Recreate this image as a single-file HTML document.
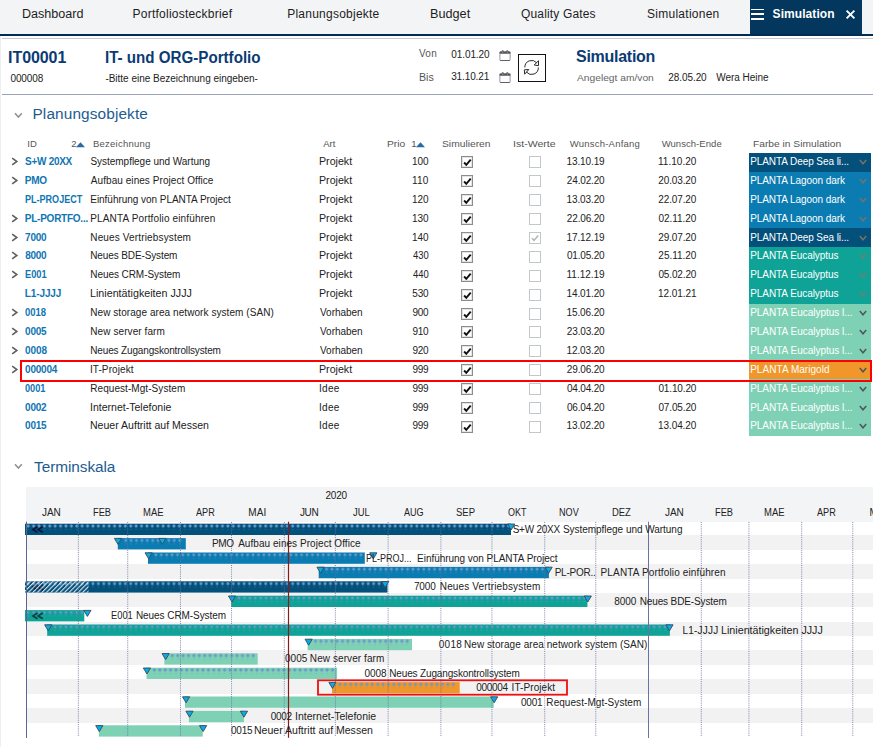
<!DOCTYPE html><html><head><meta charset="utf-8"><title>Simulation</title><style>
html,body{margin:0;padding:0}body{width:873px;height:747px;position:relative;overflow:hidden;background:#fff;font-family:"Liberation Sans", Arial, sans-serif}
.t{position:absolute;white-space:pre;line-height:1;transform-origin:0 0}
#edge{position:absolute;left:0;top:36px;width:1.3px;height:711px;background:#efefef}
</style></head><body>
<div id="edge"></div>
<div style="position:absolute;left:0.00px;top:0.00px;width:873.00px;height:34.00px;background:#f3f4f6;"></div>
<div style="position:absolute;left:750.40px;top:0.00px;width:111.50px;height:34.00px;background:#03375d;"></div>
<div style="position:absolute;left:0.00px;top:34.00px;width:873.00px;height:2.00px;background:#022c52;"></div>
<div style="position:absolute;left:2.00px;top:37.50px;width:871.00px;height:1.30px;background:#c3c8d1;"></div>
<div style="position:absolute;left:751.00px;top:8.50px;width:13.40px;height:1.80px;background:#fff;"></div>
<div style="position:absolute;left:751.00px;top:13.30px;width:13.40px;height:1.80px;background:#fff;"></div>
<div style="position:absolute;left:751.00px;top:18.00px;width:13.40px;height:1.80px;background:#fff;"></div>
<svg style="position:absolute;left:845px;top:8.9px" width="11" height="11" viewBox="0 0 11 11"><path d="M1.6 1.6 L9.4 9.4 M9.4 1.6 L1.6 9.4" stroke="#fff" stroke-width="1.9" fill="none"/></svg>
<div style="position:absolute;left:2.00px;top:94.00px;width:871.00px;height:1.00px;background:#9aa3b8;"></div>
<svg style="position:absolute;left:498.8px;top:50px" width="12" height="12" viewBox="0 0 12 12"><rect x="0.9" y="1.9" width="10.2" height="8.6" rx="0.8" fill="#fff" stroke="#8d8894" stroke-width="0.9"/><path d="M1.2 10.5 H10.8" stroke="#5a5860" stroke-width="0.9"/><rect x="0.5" y="1.4" width="11" height="2.4" rx="0.8" fill="#55535a"/><rect x="2.6" y="0.3" width="2.2" height="2" rx="1" fill="#55535a"/><rect x="7.2" y="0.3" width="2.2" height="2" rx="1" fill="#55535a"/><circle cx="3.7" cy="2.1" r="0.7" fill="#c9a078"/><circle cx="8.3" cy="2.1" r="0.7" fill="#8fa6c8"/></svg>
<svg style="position:absolute;left:498.8px;top:71.6px" width="12" height="12" viewBox="0 0 12 12"><rect x="0.9" y="1.9" width="10.2" height="8.6" rx="0.8" fill="#fff" stroke="#8d8894" stroke-width="0.9"/><path d="M1.2 10.5 H10.8" stroke="#5a5860" stroke-width="0.9"/><rect x="0.5" y="1.4" width="11" height="2.4" rx="0.8" fill="#55535a"/><rect x="2.6" y="0.3" width="2.2" height="2" rx="1" fill="#55535a"/><rect x="7.2" y="0.3" width="2.2" height="2" rx="1" fill="#55535a"/><circle cx="3.7" cy="2.1" r="0.7" fill="#c9a078"/><circle cx="8.3" cy="2.1" r="0.7" fill="#8fa6c8"/></svg>
<div style="position:absolute;left:518px;top:54px;width:26px;height:26px;border:1px solid #111;background:#fff"></div>
<svg style="position:absolute;left:518px;top:54px" width="28" height="28" viewBox="518 54 28 28" fill="none" stroke="#2a2a2a" stroke-width="1" stroke-linejoin="round" stroke-linecap="round"><path d="M524.8 67 A6.8 6.8 0 0 1 536.6 62.6"/><path d="M534.5 64.7 L538.5 60.7 L538.5 65.3 Z"/><path d="M538.4 67.9 A6.8 6.8 0 0 1 526.6 72.3"/><path d="M524.7 69.8 L528.8 69.5 L524.9 73.9 Z"/></svg>
<svg style="position:absolute;left:14.3px;top:111.6px" width="9" height="7" viewBox="0 0 9 7"><path d="M1 1.2 L4.4 5 L7.8 1.2" stroke="#929292" stroke-width="1.6" fill="none"/></svg>
<svg style="position:absolute;left:14.3px;top:463px" width="9" height="7" viewBox="0 0 9 7"><path d="M1 1.2 L4.4 5 L7.8 1.2" stroke="#929292" stroke-width="1.6" fill="none"/></svg>
<svg style="position:absolute;left:76.0px;top:141.8px" width="10" height="6" viewBox="0 0 10 6"><path d="M0 5.2 L4.5 0.2 L9 5.2 Z" fill="#2a6aa3"/></svg>
<svg style="position:absolute;left:416.2px;top:141.8px" width="10" height="6" viewBox="0 0 10 6"><path d="M0 5.2 L4.5 0.2 L9 5.2 Z" fill="#2a6aa3"/></svg>
<div style="position:absolute;left:749.00px;top:153.00px;width:122.00px;height:19.00px;background:#03507a;"></div>
<svg style="position:absolute;left:11.0px;top:156.90px" width="8" height="9" viewBox="0 0 8 9"><path d="M1.2 1.2 L5.8 4.5 L1.2 7.8" stroke="#606060" stroke-width="1.6" fill="none"/></svg>
<svg style="position:absolute;left:461px;top:156.00px" width="12" height="12" viewBox="0 0 12 12"><rect x="0.5" y="0.5" width="11" height="11" fill="#fff" stroke="#8c8c8c"/><rect x="1.5" y="1.5" width="9" height="9" fill="none" stroke="#e4e4e4"/><path d="M3.1 6.5 L5.3 8.9 L9.7 3.6" stroke="#111" stroke-width="1.9" fill="none"/></svg>
<svg style="position:absolute;left:529px;top:156.00px" width="12" height="12" viewBox="0 0 12 12"><rect x="0.5" y="0.5" width="11" height="11" fill="#fff" stroke="#c4c7c9"/></svg>
<svg style="position:absolute;left:858.5px;top:159.10px" width="8" height="7" viewBox="0 0 8 7"><path d="M0.8 1 L4 4.8 L7.2 1" stroke="#7b6f68" stroke-width="1.5" fill="none"/></svg>
<div style="position:absolute;left:749.00px;top:172.00px;width:122.00px;height:19.00px;background:#0a7cb2;"></div>
<svg style="position:absolute;left:11.0px;top:175.90px" width="8" height="9" viewBox="0 0 8 9"><path d="M1.2 1.2 L5.8 4.5 L1.2 7.8" stroke="#606060" stroke-width="1.6" fill="none"/></svg>
<svg style="position:absolute;left:461px;top:175.00px" width="12" height="12" viewBox="0 0 12 12"><rect x="0.5" y="0.5" width="11" height="11" fill="#fff" stroke="#8c8c8c"/><rect x="1.5" y="1.5" width="9" height="9" fill="none" stroke="#e4e4e4"/><path d="M3.1 6.5 L5.3 8.9 L9.7 3.6" stroke="#111" stroke-width="1.9" fill="none"/></svg>
<svg style="position:absolute;left:529px;top:175.00px" width="12" height="12" viewBox="0 0 12 12"><rect x="0.5" y="0.5" width="11" height="11" fill="#fff" stroke="#c4c7c9"/></svg>
<svg style="position:absolute;left:858.5px;top:178.10px" width="8" height="7" viewBox="0 0 8 7"><path d="M0.8 1 L4 4.8 L7.2 1" stroke="#7b6f68" stroke-width="1.5" fill="none"/></svg>
<div style="position:absolute;left:749.00px;top:191.00px;width:122.00px;height:18.00px;background:#0a7cb2;"></div>
<svg style="position:absolute;left:461px;top:194.00px" width="12" height="12" viewBox="0 0 12 12"><rect x="0.5" y="0.5" width="11" height="11" fill="#fff" stroke="#8c8c8c"/><rect x="1.5" y="1.5" width="9" height="9" fill="none" stroke="#e4e4e4"/><path d="M3.1 6.5 L5.3 8.9 L9.7 3.6" stroke="#111" stroke-width="1.9" fill="none"/></svg>
<svg style="position:absolute;left:529px;top:194.00px" width="12" height="12" viewBox="0 0 12 12"><rect x="0.5" y="0.5" width="11" height="11" fill="#fff" stroke="#c4c7c9"/></svg>
<svg style="position:absolute;left:858.5px;top:197.10px" width="8" height="7" viewBox="0 0 8 7"><path d="M0.8 1 L4 4.8 L7.2 1" stroke="#7b6f68" stroke-width="1.5" fill="none"/></svg>
<div style="position:absolute;left:749.00px;top:209.00px;width:122.00px;height:19.00px;background:#0a7cb2;"></div>
<svg style="position:absolute;left:11.0px;top:213.90px" width="8" height="9" viewBox="0 0 8 9"><path d="M1.2 1.2 L5.8 4.5 L1.2 7.8" stroke="#606060" stroke-width="1.6" fill="none"/></svg>
<svg style="position:absolute;left:461px;top:213.00px" width="12" height="12" viewBox="0 0 12 12"><rect x="0.5" y="0.5" width="11" height="11" fill="#fff" stroke="#8c8c8c"/><rect x="1.5" y="1.5" width="9" height="9" fill="none" stroke="#e4e4e4"/><path d="M3.1 6.5 L5.3 8.9 L9.7 3.6" stroke="#111" stroke-width="1.9" fill="none"/></svg>
<svg style="position:absolute;left:529px;top:213.00px" width="12" height="12" viewBox="0 0 12 12"><rect x="0.5" y="0.5" width="11" height="11" fill="#fff" stroke="#c4c7c9"/></svg>
<svg style="position:absolute;left:858.5px;top:216.10px" width="8" height="7" viewBox="0 0 8 7"><path d="M0.8 1 L4 4.8 L7.2 1" stroke="#7b6f68" stroke-width="1.5" fill="none"/></svg>
<div style="position:absolute;left:749.00px;top:228.00px;width:122.00px;height:19.00px;background:#03507a;"></div>
<svg style="position:absolute;left:11.0px;top:232.90px" width="8" height="9" viewBox="0 0 8 9"><path d="M1.2 1.2 L5.8 4.5 L1.2 7.8" stroke="#606060" stroke-width="1.6" fill="none"/></svg>
<svg style="position:absolute;left:461px;top:232.00px" width="12" height="12" viewBox="0 0 12 12"><rect x="0.5" y="0.5" width="11" height="11" fill="#fff" stroke="#8c8c8c"/><rect x="1.5" y="1.5" width="9" height="9" fill="none" stroke="#e4e4e4"/><path d="M3.1 6.5 L5.3 8.9 L9.7 3.6" stroke="#111" stroke-width="1.9" fill="none"/></svg>
<svg style="position:absolute;left:529px;top:232.00px" width="12" height="12" viewBox="0 0 12 12"><rect x="0.5" y="0.5" width="11" height="11" fill="#fff" stroke="#c4c7c9"/><path d="M3 6.2 L5 8.4 L9.2 3.4" stroke="#b5b5b5" stroke-width="1.6" fill="none"/></svg>
<svg style="position:absolute;left:858.5px;top:235.10px" width="8" height="7" viewBox="0 0 8 7"><path d="M0.8 1 L4 4.8 L7.2 1" stroke="#7b6f68" stroke-width="1.5" fill="none"/></svg>
<div style="position:absolute;left:749.00px;top:247.00px;width:122.00px;height:19.00px;background:#0fa397;"></div>
<svg style="position:absolute;left:11.0px;top:250.90px" width="8" height="9" viewBox="0 0 8 9"><path d="M1.2 1.2 L5.8 4.5 L1.2 7.8" stroke="#606060" stroke-width="1.6" fill="none"/></svg>
<svg style="position:absolute;left:461px;top:251.00px" width="12" height="12" viewBox="0 0 12 12"><rect x="0.5" y="0.5" width="11" height="11" fill="#fff" stroke="#8c8c8c"/><rect x="1.5" y="1.5" width="9" height="9" fill="none" stroke="#e4e4e4"/><path d="M3.1 6.5 L5.3 8.9 L9.7 3.6" stroke="#111" stroke-width="1.9" fill="none"/></svg>
<svg style="position:absolute;left:529px;top:251.00px" width="12" height="12" viewBox="0 0 12 12"><rect x="0.5" y="0.5" width="11" height="11" fill="#fff" stroke="#c4c7c9"/></svg>
<svg style="position:absolute;left:858.5px;top:253.10px" width="8" height="7" viewBox="0 0 8 7"><path d="M0.8 1 L4 4.8 L7.2 1" stroke="#6f7f72" stroke-width="1.5" fill="none"/></svg>
<div style="position:absolute;left:749.00px;top:266.00px;width:122.00px;height:19.00px;background:#0fa397;"></div>
<svg style="position:absolute;left:11.0px;top:269.90px" width="8" height="9" viewBox="0 0 8 9"><path d="M1.2 1.2 L5.8 4.5 L1.2 7.8" stroke="#606060" stroke-width="1.6" fill="none"/></svg>
<svg style="position:absolute;left:461px;top:270.00px" width="12" height="12" viewBox="0 0 12 12"><rect x="0.5" y="0.5" width="11" height="11" fill="#fff" stroke="#8c8c8c"/><rect x="1.5" y="1.5" width="9" height="9" fill="none" stroke="#e4e4e4"/><path d="M3.1 6.5 L5.3 8.9 L9.7 3.6" stroke="#111" stroke-width="1.9" fill="none"/></svg>
<svg style="position:absolute;left:529px;top:270.00px" width="12" height="12" viewBox="0 0 12 12"><rect x="0.5" y="0.5" width="11" height="11" fill="#fff" stroke="#c4c7c9"/></svg>
<svg style="position:absolute;left:858.5px;top:272.10px" width="8" height="7" viewBox="0 0 8 7"><path d="M0.8 1 L4 4.8 L7.2 1" stroke="#6f7f72" stroke-width="1.5" fill="none"/></svg>
<div style="position:absolute;left:749.00px;top:285.00px;width:122.00px;height:19.00px;background:#0fa397;"></div>
<svg style="position:absolute;left:461px;top:289.00px" width="12" height="12" viewBox="0 0 12 12"><rect x="0.5" y="0.5" width="11" height="11" fill="#fff" stroke="#8c8c8c"/><rect x="1.5" y="1.5" width="9" height="9" fill="none" stroke="#e4e4e4"/><path d="M3.1 6.5 L5.3 8.9 L9.7 3.6" stroke="#111" stroke-width="1.9" fill="none"/></svg>
<svg style="position:absolute;left:529px;top:289.00px" width="12" height="12" viewBox="0 0 12 12"><rect x="0.5" y="0.5" width="11" height="11" fill="#fff" stroke="#c4c7c9"/></svg>
<svg style="position:absolute;left:858.5px;top:291.10px" width="8" height="7" viewBox="0 0 8 7"><path d="M0.8 1 L4 4.8 L7.2 1" stroke="#6f7f72" stroke-width="1.5" fill="none"/></svg>
<div style="position:absolute;left:749.00px;top:304.00px;width:122.00px;height:19.00px;background:#7fd1b5;"></div>
<svg style="position:absolute;left:11.0px;top:307.90px" width="8" height="9" viewBox="0 0 8 9"><path d="M1.2 1.2 L5.8 4.5 L1.2 7.8" stroke="#606060" stroke-width="1.6" fill="none"/></svg>
<svg style="position:absolute;left:461px;top:308.00px" width="12" height="12" viewBox="0 0 12 12"><rect x="0.5" y="0.5" width="11" height="11" fill="#fff" stroke="#8c8c8c"/><rect x="1.5" y="1.5" width="9" height="9" fill="none" stroke="#e4e4e4"/><path d="M3.1 6.5 L5.3 8.9 L9.7 3.6" stroke="#111" stroke-width="1.9" fill="none"/></svg>
<svg style="position:absolute;left:529px;top:308.00px" width="12" height="12" viewBox="0 0 12 12"><rect x="0.5" y="0.5" width="11" height="11" fill="#fff" stroke="#c4c7c9"/></svg>
<svg style="position:absolute;left:858.5px;top:310.10px" width="8" height="7" viewBox="0 0 8 7"><path d="M0.8 1 L4 4.8 L7.2 1" stroke="#4f5560" stroke-width="1.5" fill="none"/></svg>
<div style="position:absolute;left:749.00px;top:323.00px;width:122.00px;height:19.00px;background:#7fd1b5;"></div>
<svg style="position:absolute;left:11.0px;top:326.90px" width="8" height="9" viewBox="0 0 8 9"><path d="M1.2 1.2 L5.8 4.5 L1.2 7.8" stroke="#606060" stroke-width="1.6" fill="none"/></svg>
<svg style="position:absolute;left:461px;top:326.00px" width="12" height="12" viewBox="0 0 12 12"><rect x="0.5" y="0.5" width="11" height="11" fill="#fff" stroke="#8c8c8c"/><rect x="1.5" y="1.5" width="9" height="9" fill="none" stroke="#e4e4e4"/><path d="M3.1 6.5 L5.3 8.9 L9.7 3.6" stroke="#111" stroke-width="1.9" fill="none"/></svg>
<svg style="position:absolute;left:529px;top:326.00px" width="12" height="12" viewBox="0 0 12 12"><rect x="0.5" y="0.5" width="11" height="11" fill="#fff" stroke="#c4c7c9"/></svg>
<svg style="position:absolute;left:858.5px;top:329.10px" width="8" height="7" viewBox="0 0 8 7"><path d="M0.8 1 L4 4.8 L7.2 1" stroke="#4f5560" stroke-width="1.5" fill="none"/></svg>
<div style="position:absolute;left:749.00px;top:342.00px;width:122.00px;height:18.00px;background:#7fd1b5;"></div>
<svg style="position:absolute;left:11.0px;top:345.90px" width="8" height="9" viewBox="0 0 8 9"><path d="M1.2 1.2 L5.8 4.5 L1.2 7.8" stroke="#606060" stroke-width="1.6" fill="none"/></svg>
<svg style="position:absolute;left:461px;top:345.00px" width="12" height="12" viewBox="0 0 12 12"><rect x="0.5" y="0.5" width="11" height="11" fill="#fff" stroke="#8c8c8c"/><rect x="1.5" y="1.5" width="9" height="9" fill="none" stroke="#e4e4e4"/><path d="M3.1 6.5 L5.3 8.9 L9.7 3.6" stroke="#111" stroke-width="1.9" fill="none"/></svg>
<svg style="position:absolute;left:529px;top:345.00px" width="12" height="12" viewBox="0 0 12 12"><rect x="0.5" y="0.5" width="11" height="11" fill="#fff" stroke="#c4c7c9"/></svg>
<svg style="position:absolute;left:858.5px;top:348.10px" width="8" height="7" viewBox="0 0 8 7"><path d="M0.8 1 L4 4.8 L7.2 1" stroke="#4f5560" stroke-width="1.5" fill="none"/></svg>
<div style="position:absolute;left:749.00px;top:360.00px;width:122.00px;height:19.00px;background:#f0962a;"></div>
<svg style="position:absolute;left:11.0px;top:364.90px" width="8" height="9" viewBox="0 0 8 9"><path d="M1.2 1.2 L5.8 4.5 L1.2 7.8" stroke="#606060" stroke-width="1.6" fill="none"/></svg>
<svg style="position:absolute;left:461px;top:364.00px" width="12" height="12" viewBox="0 0 12 12"><rect x="0.5" y="0.5" width="11" height="11" fill="#fff" stroke="#8c8c8c"/><rect x="1.5" y="1.5" width="9" height="9" fill="none" stroke="#e4e4e4"/><path d="M3.1 6.5 L5.3 8.9 L9.7 3.6" stroke="#111" stroke-width="1.9" fill="none"/></svg>
<svg style="position:absolute;left:529px;top:364.00px" width="12" height="12" viewBox="0 0 12 12"><rect x="0.5" y="0.5" width="11" height="11" fill="#fff" stroke="#c4c7c9"/></svg>
<svg style="position:absolute;left:858.5px;top:367.10px" width="8" height="7" viewBox="0 0 8 7"><path d="M0.8 1 L4 4.8 L7.2 1" stroke="#4f5560" stroke-width="1.5" fill="none"/></svg>
<div style="position:absolute;left:749.00px;top:379.00px;width:122.00px;height:19.00px;background:#7fd1b5;"></div>
<svg style="position:absolute;left:461px;top:383.00px" width="12" height="12" viewBox="0 0 12 12"><rect x="0.5" y="0.5" width="11" height="11" fill="#fff" stroke="#8c8c8c"/><rect x="1.5" y="1.5" width="9" height="9" fill="none" stroke="#e4e4e4"/><path d="M3.1 6.5 L5.3 8.9 L9.7 3.6" stroke="#111" stroke-width="1.9" fill="none"/></svg>
<svg style="position:absolute;left:529px;top:383.00px" width="12" height="12" viewBox="0 0 12 12"><rect x="0.5" y="0.5" width="11" height="11" fill="#fff" stroke="#c4c7c9"/></svg>
<svg style="position:absolute;left:858.5px;top:386.10px" width="8" height="7" viewBox="0 0 8 7"><path d="M0.8 1 L4 4.8 L7.2 1" stroke="#4f5560" stroke-width="1.5" fill="none"/></svg>
<div style="position:absolute;left:749.00px;top:398.00px;width:122.00px;height:19.00px;background:#7fd1b5;"></div>
<svg style="position:absolute;left:461px;top:402.00px" width="12" height="12" viewBox="0 0 12 12"><rect x="0.5" y="0.5" width="11" height="11" fill="#fff" stroke="#8c8c8c"/><rect x="1.5" y="1.5" width="9" height="9" fill="none" stroke="#e4e4e4"/><path d="M3.1 6.5 L5.3 8.9 L9.7 3.6" stroke="#111" stroke-width="1.9" fill="none"/></svg>
<svg style="position:absolute;left:529px;top:402.00px" width="12" height="12" viewBox="0 0 12 12"><rect x="0.5" y="0.5" width="11" height="11" fill="#fff" stroke="#c4c7c9"/></svg>
<svg style="position:absolute;left:858.5px;top:405.10px" width="8" height="7" viewBox="0 0 8 7"><path d="M0.8 1 L4 4.8 L7.2 1" stroke="#4f5560" stroke-width="1.5" fill="none"/></svg>
<div style="position:absolute;left:749.00px;top:417.00px;width:122.00px;height:19.00px;background:#7fd1b5;"></div>
<svg style="position:absolute;left:461px;top:421.00px" width="12" height="12" viewBox="0 0 12 12"><rect x="0.5" y="0.5" width="11" height="11" fill="#fff" stroke="#8c8c8c"/><rect x="1.5" y="1.5" width="9" height="9" fill="none" stroke="#e4e4e4"/><path d="M3.1 6.5 L5.3 8.9 L9.7 3.6" stroke="#111" stroke-width="1.9" fill="none"/></svg>
<svg style="position:absolute;left:529px;top:421.00px" width="12" height="12" viewBox="0 0 12 12"><rect x="0.5" y="0.5" width="11" height="11" fill="#fff" stroke="#c4c7c9"/></svg>
<svg style="position:absolute;left:858.5px;top:423.10px" width="8" height="7" viewBox="0 0 8 7"><path d="M0.8 1 L4 4.8 L7.2 1" stroke="#4f5560" stroke-width="1.5" fill="none"/></svg>
<div style="position:absolute;left:26.00px;top:487.00px;width:847.00px;height:34.70px;background:#f3f4f6;"></div>
<div style="position:absolute;left:26.00px;top:535.10px;width:847.00px;height:14.70px;background:#f2f2f2;"></div>
<div style="position:absolute;left:26.00px;top:563.90px;width:847.00px;height:14.70px;background:#f2f2f2;"></div>
<div style="position:absolute;left:26.00px;top:592.70px;width:847.00px;height:14.70px;background:#f2f2f2;"></div>
<div style="position:absolute;left:26.00px;top:621.50px;width:847.00px;height:14.70px;background:#f2f2f2;"></div>
<div style="position:absolute;left:26.00px;top:650.30px;width:847.00px;height:14.70px;background:#f2f2f2;"></div>
<div style="position:absolute;left:26.00px;top:679.10px;width:847.00px;height:14.70px;background:#f2f2f2;"></div>
<div style="position:absolute;left:26.00px;top:707.90px;width:847.00px;height:14.70px;background:#f2f2f2;"></div>
<svg style="position:absolute;left:0;top:0" width="873" height="747" viewBox="0 0 873 747">
<defs><pattern id="hat" width="3.2" height="3.2" patternUnits="userSpaceOnUse" patternTransform="rotate(45)"><rect width="1.1" height="3.2" fill="#fff"/></pattern><pattern id="dd" x="0" y="0" width="5.397" height="8" patternUnits="userSpaceOnUse"><path d="M0.999 3 L2.699 1.3 L4.399 3 L2.699 4.7 Z" fill="#5ca3e2" stroke="#5f7d9c" stroke-width="0.5"/><rect x="2.099" y="6" width="1.2" height="0.9" fill="rgba(150,190,225,0.28)"/></pattern><pattern id="dl" x="0" y="0" width="5.397" height="8" patternUnits="userSpaceOnUse"><path d="M0.999 3 L2.699 1.3 L4.399 3 L2.699 4.7 Z" fill="#5c9ddb" stroke="#8099b5" stroke-width="0.5"/><rect x="2.099" y="6" width="1.2" height="0.9" fill="rgba(90,120,150,0.30)"/></pattern></defs>
<rect x="25.00" y="523.70" width="486.00" height="11.30" fill="#03507a"/>
<g transform="translate(25.50 523.00)"><rect x="0" y="0" width="485.73" height="8" fill="url(#dd)"/></g>
<path d="M37.5 526.6 L32.9 529.5 L37.5 532.4" stroke="#0a1238" stroke-width="1.6" fill="none"/>
<path d="M42.8 526.6 L38.2 529.5 L42.8 532.4" stroke="#0a1238" stroke-width="1.6" fill="none"/>
<path d="M507.57 524.00 L514.77 524.00 L511.17 530.00 Z" fill="#00aeef" stroke="#3c4650" stroke-width="0.9" stroke-linejoin="round"/>
<rect x="117.80" y="538.10" width="68.00" height="11.30" fill="#0a7cb2"/>
<g transform="translate(123.00 537.40)"><rect x="0" y="0" width="59.37" height="8" fill="url(#dd)"/></g>
<path d="M114.41 538.40 L121.61 538.40 L118.01 544.40 Z" fill="#00aeef" stroke="#3c4650" stroke-width="0.9" stroke-linejoin="round"/>
<path d="M158.66 538.40 L165.86 538.40 L162.26 544.40 Z" fill="#00aeef" stroke="#3c4650" stroke-width="0.9" stroke-linejoin="round"/>
<rect x="148.00" y="552.50" width="216.80" height="11.30" fill="#0a7cb2"/>
<g transform="translate(153.20 551.80)"><rect x="0" y="0" width="210.48" height="8" fill="url(#dd)"/></g>
<path d="M145.04 552.80 L152.24 552.80 L148.64 558.80 Z" fill="#00aeef" stroke="#3c4650" stroke-width="0.9" stroke-linejoin="round"/>
<path d="M369.71 552.80 L376.91 552.80 L373.31 558.80 Z" fill="#00aeef" stroke="#3c4650" stroke-width="0.9" stroke-linejoin="round"/>
<rect x="318.70" y="566.90" width="230.20" height="11.30" fill="#0a7cb2"/>
<g transform="translate(323.90 566.20)"><rect x="0" y="0" width="221.28" height="8" fill="url(#dd)"/></g>
<path d="M316.95 567.20 L324.15 567.20 L320.55 573.20 Z" fill="#00aeef" stroke="#3c4650" stroke-width="0.9" stroke-linejoin="round"/>
<path d="M545.01 567.20 L552.21 567.20 L548.61 573.20 Z" fill="#00aeef" stroke="#3c4650" stroke-width="0.9" stroke-linejoin="round"/>
<rect x="25.00" y="581.30" width="362.50" height="11.30" fill="#03507a"/>
<g transform="translate(25.50 580.60)"><rect x="0" y="0" width="361.60" height="8" fill="url(#dd)"/></g>
<path d="M37.5 584.2 L32.9 587.1 L37.5 590.0" stroke="#0a1238" stroke-width="1.6" fill="none"/>
<path d="M42.8 584.2 L38.2 587.1 L42.8 590.0" stroke="#0a1238" stroke-width="1.6" fill="none"/>
<rect x="25.00" y="581.30" width="63.50" height="11.30" fill="url(#hat)" opacity="0.85"/>
<path d="M381.62 581.60 L388.82 581.60 L385.22 587.60 Z" fill="#00aeef" stroke="#3c4650" stroke-width="0.9" stroke-linejoin="round"/>
<rect x="231.20" y="595.70" width="356.20" height="11.30" fill="#0fa397"/>
<g transform="translate(236.40 595.00)"><rect x="0" y="0" width="350.81" height="8" fill="url(#dd)"/></g>
<path d="M228.44 596.00 L235.64 596.00 L232.04 602.00 Z" fill="#00aeef" stroke="#3c4650" stroke-width="0.9" stroke-linejoin="round"/>
<path d="M584.16 596.00 L591.36 596.00 L587.76 602.00 Z" fill="#00aeef" stroke="#3c4650" stroke-width="0.9" stroke-linejoin="round"/>
<rect x="25.00" y="610.10" width="59.30" height="11.30" fill="#0fa397"/>
<g transform="translate(25.50 609.40)"><rect x="0" y="0" width="59.37" height="8" fill="url(#dd)"/></g>
<path d="M37.5 613.0 L32.9 615.9 L37.5 618.8" stroke="#0a3f3a" stroke-width="1.6" fill="none"/>
<path d="M42.8 613.0 L38.2 615.9 L42.8 618.8" stroke="#0a3f3a" stroke-width="1.6" fill="none"/>
<path d="M83.77 610.40 L90.97 610.40 L87.37 616.40 Z" fill="#00aeef" stroke="#3c4650" stroke-width="0.9" stroke-linejoin="round"/>
<rect x="47.20" y="624.50" width="622.70" height="11.30" fill="#0fa397"/>
<g transform="translate(52.40 623.80)"><rect x="0" y="0" width="615.26" height="8" fill="url(#dd)"/></g>
<path d="M44.63 624.80 L51.83 624.80 L48.23 630.80 Z" fill="#00aeef" stroke="#3c4650" stroke-width="0.9" stroke-linejoin="round"/>
<path d="M665.86 624.80 L673.06 624.80 L669.46 630.80 Z" fill="#00aeef" stroke="#3c4650" stroke-width="0.9" stroke-linejoin="round"/>
<rect x="307.60" y="638.90" width="104.40" height="11.30" fill="#7fd1b5"/>
<g transform="translate(312.80 638.20)"><rect x="0" y="0" width="97.15" height="8" fill="url(#dl)"/></g>
<path d="M305.03 639.20 L312.23 639.20 L308.63 645.20 Z" fill="#00aeef" stroke="#3c4650" stroke-width="0.9" stroke-linejoin="round"/>
<rect x="164.40" y="653.30" width="93.30" height="11.30" fill="#7fd1b5"/>
<g transform="translate(169.60 652.60)"><rect x="0" y="0" width="86.35" height="8" fill="url(#dl)"/></g>
<path d="M162.06 653.60 L169.26 653.60 L165.66 659.60 Z" fill="#00aeef" stroke="#3c4650" stroke-width="0.9" stroke-linejoin="round"/>
<rect x="146.50" y="667.70" width="190.60" height="11.30" fill="#7fd1b5"/>
<g transform="translate(151.70 667.00)"><rect x="0" y="0" width="183.50" height="8" fill="url(#dl)"/></g>
<path d="M143.34 668.00 L150.54 668.00 L146.94 674.00 Z" fill="#00aeef" stroke="#3c4650" stroke-width="0.9" stroke-linejoin="round"/>
<rect x="332.00" y="682.10" width="127.70" height="11.30" fill="#f0962a"/>
<g transform="translate(337.20 681.40)"><rect x="0" y="0" width="118.73" height="8" fill="url(#dl)"/></g>
<path d="M328.86 682.40 L336.06 682.40 L332.46 688.40 Z" fill="#00aeef" stroke="#3c4650" stroke-width="0.9" stroke-linejoin="round"/>
<rect x="185.00" y="696.50" width="308.70" height="11.30" fill="#7fd1b5"/>
<path d="M182.49 696.80 L189.69 696.80 L186.09 702.80 Z" fill="#00aeef" stroke="#3c4650" stroke-width="0.9" stroke-linejoin="round"/>
<path d="M490.55 696.80 L497.75 696.80 L494.15 702.80 Z" fill="#00aeef" stroke="#3c4650" stroke-width="0.9" stroke-linejoin="round"/>
<rect x="188.90" y="710.90" width="55.00" height="11.30" fill="#7fd1b5"/>
<path d="M185.89 711.20 L193.09 711.20 L189.49 717.20 Z" fill="#00aeef" stroke="#3c4650" stroke-width="0.9" stroke-linejoin="round"/>
<path d="M240.36 711.20 L247.56 711.20 L243.96 717.20 Z" fill="#00aeef" stroke="#3c4650" stroke-width="0.9" stroke-linejoin="round"/>
<rect x="98.90" y="725.30" width="103.80" height="11.30" fill="#7fd1b5"/>
<path d="M95.69 725.60 L102.89 725.60 L99.29 731.60 Z" fill="#00aeef" stroke="#3c4650" stroke-width="0.9" stroke-linejoin="round"/>
<path d="M199.51 725.60 L206.71 725.60 L203.11 731.60 Z" fill="#00aeef" stroke="#3c4650" stroke-width="0.9" stroke-linejoin="round"/>
<line x1="78.36" y1="522.0" x2="78.36" y2="736" stroke="#6b72a2" stroke-width="1" stroke-dasharray="1 1.15" stroke-opacity="0.85"/>
<line x1="127.72" y1="522.0" x2="127.72" y2="736" stroke="#6b72a2" stroke-width="1" stroke-dasharray="1 1.15" stroke-opacity="0.85"/>
<line x1="180.48" y1="522.0" x2="180.48" y2="736" stroke="#6b72a2" stroke-width="1" stroke-dasharray="1 1.15" stroke-opacity="0.85"/>
<line x1="231.54" y1="522.0" x2="231.54" y2="736" stroke="#6b72a2" stroke-width="1" stroke-dasharray="1 1.15" stroke-opacity="0.85"/>
<line x1="284.3" y1="522.0" x2="284.3" y2="736" stroke="#6b72a2" stroke-width="1" stroke-dasharray="1 1.15" stroke-opacity="0.85"/>
<line x1="335.36" y1="522.0" x2="335.36" y2="736" stroke="#6b72a2" stroke-width="1" stroke-dasharray="1 1.15" stroke-opacity="0.85"/>
<line x1="388.13" y1="522.0" x2="388.13" y2="736" stroke="#6b72a2" stroke-width="1" stroke-dasharray="1 1.15" stroke-opacity="0.85"/>
<line x1="440.89" y1="522.0" x2="440.89" y2="736" stroke="#6b72a2" stroke-width="1" stroke-dasharray="1 1.15" stroke-opacity="0.85"/>
<line x1="491.95" y1="522.0" x2="491.95" y2="736" stroke="#6b72a2" stroke-width="1" stroke-dasharray="1 1.15" stroke-opacity="0.85"/>
<line x1="544.71" y1="522.0" x2="544.71" y2="736" stroke="#6b72a2" stroke-width="1" stroke-dasharray="1 1.15" stroke-opacity="0.85"/>
<line x1="595.77" y1="522.0" x2="595.77" y2="736" stroke="#6b72a2" stroke-width="1" stroke-dasharray="1 1.15" stroke-opacity="0.85"/>
<line x1="701.29" y1="522.0" x2="701.29" y2="736" stroke="#6b72a2" stroke-width="1" stroke-dasharray="1 1.15" stroke-opacity="0.85"/>
<line x1="748.95" y1="522.0" x2="748.95" y2="736" stroke="#6b72a2" stroke-width="1" stroke-dasharray="1 1.15" stroke-opacity="0.85"/>
<line x1="801.71" y1="522.0" x2="801.71" y2="736" stroke="#6b72a2" stroke-width="1" stroke-dasharray="1 1.15" stroke-opacity="0.85"/>
<line x1="852.77" y1="522.0" x2="852.77" y2="736" stroke="#6b72a2" stroke-width="1" stroke-dasharray="1 1.15" stroke-opacity="0.85"/>
<line x1="26.5" y1="521.7" x2="26.5" y2="738" stroke="#5a6496" stroke-width="1"/>
<line x1="648.5" y1="521.7" x2="648.5" y2="738" stroke="#6a72a4" stroke-width="1"/>
<line x1="288.5" y1="521.7" x2="288.5" y2="737.8" stroke="#8b1a1a" stroke-width="1.2"/>
<rect x="318" y="680.3" width="249" height="14.4" fill="none" stroke="#ee1010" stroke-width="1.8"/>
</svg>
<div class="t" style="top:8px;font-size:12px;color:#1d1d1d;transform:scaleX(1.0474);left:21.65px;">Dashboard</div>
<div class="t" style="top:8px;font-size:12px;color:#1d1d1d;letter-spacing:0.229px;left:132.60px;">Portfoliosteckbrief</div>
<div class="t" style="top:8px;font-size:12px;color:#1d1d1d;letter-spacing:0.241px;left:287.20px;">Planungsobjekte</div>
<div class="t" style="top:8px;font-size:12px;color:#1d1d1d;transform:scaleX(1.0568);left:430.44px;">Budget</div>
<div class="t" style="top:8px;font-size:12px;color:#1d1d1d;letter-spacing:0.153px;left:521.01px;">Quality Gates</div>
<div class="t" style="top:8px;font-size:12px;color:#1d1d1d;letter-spacing:0.261px;left:647.06px;">Simulationen</div>
<div class="t" style="top:8px;font-size:12px;color:#fff;font-weight:700;letter-spacing:0.075px;left:772.57px;">Simulation</div>
<div class="t" style="top:50px;font-size:16px;color:#0b3b73;font-weight:700;letter-spacing:-0.086px;left:8.10px;">IT00001</div>
<div class="t" style="top:74px;font-size:10px;color:#222;letter-spacing:-0.107px;left:10.44px;">000008</div>
<div class="t" style="top:50px;font-size:16px;color:#0b3b73;font-weight:700;transform:scaleX(0.9460);left:104.85px;">IT- und ORG-Portfolio</div>
<div class="t" style="top:74px;font-size:10px;color:#222;letter-spacing:-0.014px;left:105.40px;">-Bitte eine Bezeichnung eingeben-</div>
<div class="t" style="top:49px;font-size:10px;color:#555;letter-spacing:0.279px;left:418.93px;">Von</div>
<div class="t" style="top:73px;font-size:10px;color:#555;transform:scaleX(1.0672);left:418.72px;">Bis</div>
<div class="t" style="top:50px;font-size:10px;color:#222;letter-spacing:-0.100px;left:451.34px;">01.01.20</div>
<div class="t" style="top:72px;font-size:10px;color:#222;letter-spacing:-0.131px;left:451.20px;">31.10.21</div>
<div class="t" style="top:49px;font-size:16px;color:#0b3b73;font-weight:700;letter-spacing:-0.264px;left:575.97px;">Simulation</div>
<div class="t" style="top:73px;font-size:9.5px;color:#666;transform:scaleX(1.0770);left:576.95px;">Angelegt am/von</div>
<div class="t" style="top:73px;font-size:10px;color:#222;letter-spacing:-0.089px;left:668.36px;">28.05.20</div>
<div class="t" style="top:73px;font-size:10px;color:#222;letter-spacing:-0.029px;left:716.17px;">Wera Heine</div>
<div class="t" style="top:106px;font-size:15.4px;color:#1d5c8f;letter-spacing:0.114px;left:32.48px;">Planungsobjekte</div>
<div class="t" style="top:459px;font-size:15.4px;color:#1d5c8f;letter-spacing:-0.083px;left:34.10px;">Terminskala</div>
<div class="t" style="top:139px;font-size:9.5px;color:#555;letter-spacing:0.060px;left:27.32px;">ID</div>
<div class="t" style="top:139px;font-size:9.5px;color:#555;left:71.15px;">2</div>
<div class="t" style="top:139px;font-size:9.5px;color:#555;letter-spacing:0.240px;left:93.00px;">Bezeichnung</div>
<div class="t" style="top:139px;font-size:9.5px;color:#555;left:323.16px;">Art</div>
<div class="t" style="top:139px;font-size:9.5px;color:#555;transform:scaleX(1.0781);left:387.45px;">Prio</div>
<div class="t" style="top:139px;font-size:9.5px;color:#555;left:411.36px;">1</div>
<div class="t" style="top:139px;font-size:9.5px;color:#555;transform:scaleX(1.0806);left:442.36px;">Simulieren</div>
<div class="t" style="top:139px;font-size:9.5px;color:#555;transform:scaleX(1.1102);left:513.03px;">Ist-Werte</div>
<div class="t" style="top:139px;font-size:9.5px;color:#555;letter-spacing:0.232px;left:569.64px;">Wunsch-Anfang</div>
<div class="t" style="top:139px;font-size:9.5px;color:#555;letter-spacing:0.054px;left:661.64px;">Wunsch-Ende</div>
<div class="t" style="top:139px;font-size:9.5px;color:#555;transform:scaleX(1.0761);left:752.75px;">Farbe in Simulation</div>
<div class="t" style="top:157px;font-size:10px;color:#0f75b3;font-weight:700;letter-spacing:-0.279px;left:25.05px;">S+W 20XX</div>
<div class="t" style="top:157px;font-size:10px;color:#222;letter-spacing:-0.026px;left:90.41px;">Systempflege und Wartung</div>
<div class="t" style="top:157px;font-size:10px;color:#222;transform:scaleX(1.0650);left:319.42px;">Projekt</div>
<div class="t" style="top:157px;font-size:10px;color:#222;letter-spacing:-0.125px;left:412.12px;">100</div>
<div class="t" style="top:157px;font-size:10px;color:#222;letter-spacing:-0.108px;left:566.52px;">13.10.19</div>
<div class="t" style="top:157px;font-size:10px;color:#222;letter-spacing:0.024px;left:658.02px;">11.10.20</div>
<div class="t" style="top:157px;font-size:10px;color:#fff;letter-spacing:-0.073px;left:750.17px;">PLANTA Deep Sea li...</div>
<div class="t" style="top:176px;font-size:10px;color:#0f75b3;font-weight:700;letter-spacing:-0.232px;left:24.81px;">PMO</div>
<div class="t" style="top:176px;font-size:10px;color:#222;letter-spacing:0.059px;left:90.85px;">Aufbau eines Project Office</div>
<div class="t" style="top:176px;font-size:10px;color:#222;transform:scaleX(1.0650);left:319.42px;">Projekt</div>
<div class="t" style="top:176px;font-size:10px;color:#222;letter-spacing:0.133px;left:412.12px;">110</div>
<div class="t" style="top:176px;font-size:10px;color:#222;letter-spacing:-0.160px;left:566.86px;">24.02.20</div>
<div class="t" style="top:176px;font-size:10px;color:#222;letter-spacing:-0.132px;left:658.36px;">20.03.20</div>
<div class="t" style="top:176px;font-size:10px;color:#fff;letter-spacing:-0.067px;left:750.17px;">PLANTA Lagoon dark</div>
<div class="t" style="top:195px;font-size:10px;color:#0f75b3;font-weight:700;transform:scaleX(0.9033);left:24.87px;">PL-PROJECT</div>
<div class="t" style="top:195px;font-size:10px;color:#222;letter-spacing:-0.036px;left:90.27px;">Einführung von PLANTA Project</div>
<div class="t" style="top:195px;font-size:10px;color:#222;transform:scaleX(1.0650);left:319.42px;">Projekt</div>
<div class="t" style="top:195px;font-size:10px;color:#222;letter-spacing:-0.125px;left:412.12px;">120</div>
<div class="t" style="top:195px;font-size:10px;color:#222;letter-spacing:-0.112px;left:566.52px;">13.03.20</div>
<div class="t" style="top:195px;font-size:10px;color:#222;letter-spacing:-0.132px;left:658.36px;">22.07.20</div>
<div class="t" style="top:195px;font-size:10px;color:#fff;letter-spacing:-0.067px;left:750.17px;">PLANTA Lagoon dark</div>
<div class="t" style="top:214px;font-size:10px;color:#0f75b3;font-weight:700;letter-spacing:-0.244px;left:24.81px;">PL-PORTFO...</div>
<div class="t" style="top:214px;font-size:10px;color:#222;letter-spacing:0.142px;left:90.27px;">PLANTA Portfolio einführen</div>
<div class="t" style="top:214px;font-size:10px;color:#222;transform:scaleX(1.0650);left:319.42px;">Projekt</div>
<div class="t" style="top:214px;font-size:10px;color:#222;letter-spacing:-0.125px;left:412.12px;">130</div>
<div class="t" style="top:214px;font-size:10px;color:#222;letter-spacing:-0.160px;left:566.86px;">22.06.20</div>
<div class="t" style="top:214px;font-size:10px;color:#222;letter-spacing:-0.036px;left:658.44px;">02.11.20</div>
<div class="t" style="top:214px;font-size:10px;color:#fff;letter-spacing:-0.067px;left:750.17px;">PLANTA Lagoon dark</div>
<div class="t" style="top:233px;font-size:10px;color:#0f75b3;font-weight:700;letter-spacing:-0.228px;left:25.08px;">7000</div>
<div class="t" style="top:233px;font-size:10px;color:#222;letter-spacing:0.150px;left:90.27px;">Neues Vertriebsystem</div>
<div class="t" style="top:233px;font-size:10px;color:#222;transform:scaleX(1.0650);left:319.42px;">Projekt</div>
<div class="t" style="top:233px;font-size:10px;color:#222;letter-spacing:-0.125px;left:412.12px;">140</div>
<div class="t" style="top:233px;font-size:10px;color:#222;letter-spacing:-0.108px;left:566.52px;">17.12.19</div>
<div class="t" style="top:233px;font-size:10px;color:#222;letter-spacing:-0.132px;left:658.36px;">29.07.20</div>
<div class="t" style="top:233px;font-size:10px;color:#fff;letter-spacing:-0.073px;left:750.17px;">PLANTA Deep Sea li...</div>
<div class="t" style="top:251px;font-size:10px;color:#0f75b3;font-weight:700;letter-spacing:-0.257px;left:25.17px;">8000</div>
<div class="t" style="top:251px;font-size:10px;color:#222;letter-spacing:-0.117px;left:90.27px;">Neues BDE-System</div>
<div class="t" style="top:251px;font-size:10px;color:#222;transform:scaleX(1.0650);left:319.42px;">Projekt</div>
<div class="t" style="top:251px;font-size:10px;color:#222;transform:scaleX(0.9434);left:412.79px;">430</div>
<div class="t" style="top:251px;font-size:10px;color:#222;letter-spacing:-0.172px;left:566.94px;">01.05.20</div>
<div class="t" style="top:251px;font-size:10px;color:#222;letter-spacing:-0.024px;left:658.36px;">25.11.20</div>
<div class="t" style="top:251px;font-size:10px;color:#fff;letter-spacing:-0.059px;left:750.17px;">PLANTA Eucalyptus</div>
<div class="t" style="top:270px;font-size:10px;color:#0f75b3;font-weight:700;transform:scaleX(0.9270);left:24.86px;">E001</div>
<div class="t" style="top:270px;font-size:10px;color:#222;letter-spacing:-0.065px;left:90.27px;">Neues CRM-System</div>
<div class="t" style="top:270px;font-size:10px;color:#222;transform:scaleX(1.0650);left:319.42px;">Projekt</div>
<div class="t" style="top:270px;font-size:10px;color:#222;transform:scaleX(0.9434);left:412.79px;">440</div>
<div class="t" style="top:270px;font-size:10px;color:#222;letter-spacing:-0.004px;left:566.52px;">11.12.19</div>
<div class="t" style="top:270px;font-size:10px;color:#222;letter-spacing:-0.143px;left:658.44px;">05.02.20</div>
<div class="t" style="top:270px;font-size:10px;color:#fff;letter-spacing:-0.059px;left:750.17px;">PLANTA Eucalyptus</div>
<div class="t" style="top:289px;font-size:10px;color:#0f75b3;font-weight:700;letter-spacing:-0.119px;left:24.81px;">L1-JJJJ</div>
<div class="t" style="top:289px;font-size:10px;color:#222;transform:scaleX(1.0721);left:90.22px;">Linientätigkeiten JJJJ</div>
<div class="t" style="top:289px;font-size:10px;color:#222;transform:scaleX(1.0650);left:319.42px;">Projekt</div>
<div class="t" style="top:289px;font-size:10px;color:#222;letter-spacing:-0.250px;left:412.37px;">530</div>
<div class="t" style="top:289px;font-size:10px;color:#222;letter-spacing:-0.112px;left:566.52px;">14.01.20</div>
<div class="t" style="top:289px;font-size:10px;color:#222;letter-spacing:-0.062px;left:658.02px;">12.01.21</div>
<div class="t" style="top:289px;font-size:10px;color:#fff;letter-spacing:-0.059px;left:750.17px;">PLANTA Eucalyptus</div>
<div class="t" style="top:308px;font-size:10px;color:#0f75b3;font-weight:700;transform:scaleX(0.9450);left:25.11px;">0018</div>
<div class="t" style="top:308px;font-size:10px;color:#222;letter-spacing:0.065px;left:90.27px;">New storage area network system (SAN)</div>
<div class="t" style="top:308px;font-size:10px;color:#222;letter-spacing:-0.027px;left:320.03px;">Vorhaben</div>
<div class="t" style="top:308px;font-size:10px;color:#222;letter-spacing:-0.291px;left:412.45px;">900</div>
<div class="t" style="top:308px;font-size:10px;color:#222;letter-spacing:-0.112px;left:566.52px;">15.06.20</div>
<div class="t" style="top:308px;font-size:10px;color:#fff;letter-spacing:-0.008px;left:750.17px;">PLANTA Eucalyptus l...</div>
<div class="t" style="top:327px;font-size:10px;color:#0f75b3;font-weight:700;letter-spacing:-0.231px;left:25.09px;">0005</div>
<div class="t" style="top:327px;font-size:10px;color:#222;letter-spacing:0.087px;left:90.27px;">New server farm</div>
<div class="t" style="top:327px;font-size:10px;color:#222;letter-spacing:-0.027px;left:320.03px;">Vorhaben</div>
<div class="t" style="top:327px;font-size:10px;color:#222;letter-spacing:-0.291px;left:412.45px;">910</div>
<div class="t" style="top:327px;font-size:10px;color:#222;letter-spacing:-0.160px;left:566.86px;">23.03.20</div>
<div class="t" style="top:327px;font-size:10px;color:#fff;letter-spacing:-0.008px;left:750.17px;">PLANTA Eucalyptus l...</div>
<div class="t" style="top:346px;font-size:10px;color:#0f75b3;font-weight:700;letter-spacing:-0.064px;left:25.09px;">0008</div>
<div class="t" style="top:346px;font-size:10px;color:#222;letter-spacing:-0.148px;left:90.27px;">Neues Zugangskontrollsystem</div>
<div class="t" style="top:346px;font-size:10px;color:#222;letter-spacing:-0.027px;left:320.03px;">Vorhaben</div>
<div class="t" style="top:346px;font-size:10px;color:#222;letter-spacing:-0.291px;left:412.45px;">920</div>
<div class="t" style="top:346px;font-size:10px;color:#222;letter-spacing:-0.112px;left:566.52px;">12.03.20</div>
<div class="t" style="top:346px;font-size:10px;color:#fff;letter-spacing:-0.008px;left:750.17px;">PLANTA Eucalyptus l...</div>
<div class="t" style="top:365px;font-size:10px;color:#0f75b3;font-weight:700;letter-spacing:-0.213px;left:25.09px;">000004</div>
<div class="t" style="top:365px;font-size:10px;color:#222;letter-spacing:0.101px;left:89.92px;">IT-Projekt</div>
<div class="t" style="top:365px;font-size:10px;color:#222;transform:scaleX(1.0650);left:319.42px;">Projekt</div>
<div class="t" style="top:365px;font-size:10px;color:#222;letter-spacing:-0.265px;left:412.45px;">999</div>
<div class="t" style="top:365px;font-size:10px;color:#222;letter-spacing:-0.160px;left:566.86px;">29.06.20</div>
<div class="t" style="top:365px;font-size:10px;color:#fff;letter-spacing:0.048px;left:750.17px;">PLANTA Marigold</div>
<div class="t" style="top:384px;font-size:10px;color:#0f75b3;font-weight:700;transform:scaleX(0.9210);left:25.12px;">0001</div>
<div class="t" style="top:384px;font-size:10px;color:#222;letter-spacing:0.062px;left:90.27px;">Request-Mgt-System</div>
<div class="t" style="top:384px;font-size:10px;color:#222;letter-spacing:0.227px;left:319.12px;">Idee</div>
<div class="t" style="top:384px;font-size:10px;color:#222;letter-spacing:-0.265px;left:412.45px;">999</div>
<div class="t" style="top:384px;font-size:10px;color:#222;letter-spacing:-0.172px;left:566.94px;">04.04.20</div>
<div class="t" style="top:384px;font-size:10px;color:#222;letter-spacing:-0.143px;left:658.44px;">01.10.20</div>
<div class="t" style="top:384px;font-size:10px;color:#fff;letter-spacing:-0.008px;left:750.17px;">PLANTA Eucalyptus l...</div>
<div class="t" style="top:403px;font-size:10px;color:#0f75b3;font-weight:700;letter-spacing:-0.231px;left:25.09px;">0002</div>
<div class="t" style="top:403px;font-size:10px;color:#222;transform:scaleX(1.0524);left:89.87px;">Internet-Telefonie</div>
<div class="t" style="top:403px;font-size:10px;color:#222;letter-spacing:0.227px;left:319.12px;">Idee</div>
<div class="t" style="top:403px;font-size:10px;color:#222;letter-spacing:-0.265px;left:412.45px;">999</div>
<div class="t" style="top:403px;font-size:10px;color:#222;letter-spacing:-0.172px;left:566.94px;">06.04.20</div>
<div class="t" style="top:403px;font-size:10px;color:#222;letter-spacing:-0.143px;left:658.44px;">07.05.20</div>
<div class="t" style="top:403px;font-size:10px;color:#fff;letter-spacing:-0.008px;left:750.17px;">PLANTA Eucalyptus l...</div>
<div class="t" style="top:421px;font-size:10px;color:#0f75b3;font-weight:700;letter-spacing:-0.231px;left:25.09px;">0015</div>
<div class="t" style="top:421px;font-size:10px;color:#222;transform:scaleX(1.0544);left:90.23px;">Neuer Auftritt auf Messen</div>
<div class="t" style="top:421px;font-size:10px;color:#222;letter-spacing:0.227px;left:319.12px;">Idee</div>
<div class="t" style="top:421px;font-size:10px;color:#222;letter-spacing:-0.265px;left:412.45px;">999</div>
<div class="t" style="top:421px;font-size:10px;color:#222;letter-spacing:-0.112px;left:566.52px;">13.02.20</div>
<div class="t" style="top:421px;font-size:10px;color:#222;letter-spacing:-0.084px;left:658.02px;">13.04.20</div>
<div class="t" style="top:421px;font-size:10px;color:#fff;letter-spacing:-0.008px;left:750.17px;">PLANTA Eucalyptus l...</div>
<div class="t" style="top:508px;font-size:10px;color:#222;letter-spacing:-0.041px;left:42.04px;">JAN</div>
<div class="t" style="top:508px;font-size:10px;color:#222;transform:scaleX(0.9247);left:93.27px;">FEB</div>
<div class="t" style="top:508px;font-size:10px;color:#222;transform:scaleX(0.9470);left:142.96px;">MAE</div>
<div class="t" style="top:508px;font-size:10px;color:#222;transform:scaleX(0.9119);left:196.17px;">APR</div>
<div class="t" style="top:508px;font-size:10px;color:#222;letter-spacing:0.154px;left:248.24px;">MAI</div>
<div class="t" style="top:508px;font-size:10px;color:#222;letter-spacing:-0.369px;left:299.94px;">JUN</div>
<div class="t" style="top:508px;font-size:10px;color:#222;transform:scaleX(0.9389);left:352.71px;">JUL</div>
<div class="t" style="top:508px;font-size:10px;color:#222;transform:scaleX(0.9011);left:404.17px;">AUG</div>
<div class="t" style="top:508px;font-size:10px;color:#222;transform:scaleX(0.9489);left:456.16px;">SEP</div>
<div class="t" style="top:508px;font-size:10px;color:#222;transform:scaleX(0.8977);left:508.27px;">OKT</div>
<div class="t" style="top:508px;font-size:10px;color:#222;transform:scaleX(0.9085);left:559.38px;">NOV</div>
<div class="t" style="top:508px;font-size:10px;color:#222;transform:scaleX(0.9439);left:611.76px;">DEZ</div>
<div class="t" style="top:508px;font-size:10px;color:#222;letter-spacing:-0.041px;left:664.97px;">JAN</div>
<div class="t" style="top:508px;font-size:10px;color:#222;transform:scaleX(0.9247);left:715.35px;">FEB</div>
<div class="t" style="top:508px;font-size:10px;color:#222;transform:scaleX(0.9470);left:764.19px;">MAE</div>
<div class="t" style="top:508px;font-size:10px;color:#222;transform:scaleX(0.9119);left:817.40px;">APR</div>
<div class="t" style="top:508px;font-size:10px;color:#222;letter-spacing:0.154px;left:869.47px;">MAI</div>
<div class="t" style="top:491px;font-size:10px;color:#222;letter-spacing:-0.249px;left:325.56px;">2020</div>
<div class="t" style="top:525px;font-size:10px;color:#222;letter-spacing:-0.261px;left:512.71px;">S+W 20XX</div>
<div class="t" style="top:525px;font-size:10px;color:#222;letter-spacing:-0.030px;left:562.91px;">Systempflege und Wartung</div>
<div class="t" style="top:539px;font-size:10px;color:#222;letter-spacing:-0.415px;left:212.07px;">PMO</div>
<div class="t" style="top:539px;font-size:10px;color:#222;letter-spacing:0.055px;left:238.15px;">Aufbau eines Project Office</div>
<div class="t" style="top:554px;font-size:10px;color:#222;transform:scaleX(0.9008);left:366.14px;">PL-PROJ...</div>
<div class="t" style="top:554px;font-size:10px;color:#222;letter-spacing:-0.039px;left:417.07px;">Einführung von PLANTA Project</div>
<div class="t" style="top:568px;font-size:10px;color:#222;letter-spacing:-0.229px;left:554.67px;">PL-POR..</div>
<div class="t" style="top:568px;font-size:10px;color:#222;letter-spacing:0.138px;left:600.57px;">PLANTA Portfolio einführen</div>
<div class="t" style="top:582px;font-size:10px;color:#222;letter-spacing:-0.145px;left:413.94px;">7000</div>
<div class="t" style="top:582px;font-size:10px;color:#222;letter-spacing:0.145px;left:439.77px;">Neues Vertriebsystem</div>
<div class="t" style="top:597px;font-size:10px;color:#222;letter-spacing:-0.031px;left:614.20px;">8000</div>
<div class="t" style="top:597px;font-size:10px;color:#222;letter-spacing:-0.124px;left:639.67px;">Neues BDE-System</div>
<div class="t" style="top:611px;font-size:10px;color:#222;transform:scaleX(0.9323);left:110.82px;">E001</div>
<div class="t" style="top:611px;font-size:10px;color:#222;letter-spacing:-0.071px;left:135.97px;">Neues CRM-System</div>
<div class="t" style="top:626px;font-size:10px;color:#222;letter-spacing:0.206px;left:682.47px;">L1-JJJJ</div>
<div class="t" style="top:626px;font-size:10px;color:#222;transform:scaleX(1.0710);left:721.22px;">Linientätigkeiten JJJJ</div>
<div class="t" style="top:640px;font-size:10px;color:#222;letter-spacing:0.222px;left:438.84px;">0018</div>
<div class="t" style="top:640px;font-size:10px;color:#222;letter-spacing:0.062px;left:463.97px;">New storage area network system (SAN)</div>
<div class="t" style="top:654px;font-size:10px;color:#222;letter-spacing:-0.008px;left:285.04px;">0005</div>
<div class="t" style="top:654px;font-size:10px;color:#222;letter-spacing:0.080px;left:309.87px;">New server farm</div>
<div class="t" style="top:669px;font-size:10px;color:#222;letter-spacing:-0.045px;left:364.44px;">0008</div>
<div class="t" style="top:669px;font-size:10px;color:#222;letter-spacing:-0.152px;left:389.27px;">Neues Zugangskontrollsystem</div>
<div class="t" style="top:683px;font-size:10px;color:#222;letter-spacing:-0.273px;left:476.14px;">000004</div>
<div class="t" style="top:683px;font-size:10px;color:#222;letter-spacing:0.090px;left:511.52px;">IT-Projekt</div>
<div class="t" style="top:698px;font-size:10px;color:#222;letter-spacing:-0.254px;left:521.04px;">0001</div>
<div class="t" style="top:698px;font-size:10px;color:#222;letter-spacing:0.056px;left:546.37px;">Request-Mgt-System</div>
<div class="t" style="top:712px;font-size:10px;color:#222;letter-spacing:-0.253px;left:270.64px;">0002</div>
<div class="t" style="top:712px;font-size:10px;color:#222;transform:scaleX(1.0511);left:294.87px;">Internet-Telefonie</div>
<div class="t" style="top:726px;font-size:10px;color:#222;letter-spacing:-0.208px;left:230.94px;">0015</div>
<div class="t" style="top:726px;font-size:10px;color:#222;transform:scaleX(1.0535);left:254.43px;">Neuer Auftritt auf Messen</div>
<div style="position:absolute;left:20px;top:360px;width:848px;height:18px;border:2px solid #ff0000"></div>
</body></html>
